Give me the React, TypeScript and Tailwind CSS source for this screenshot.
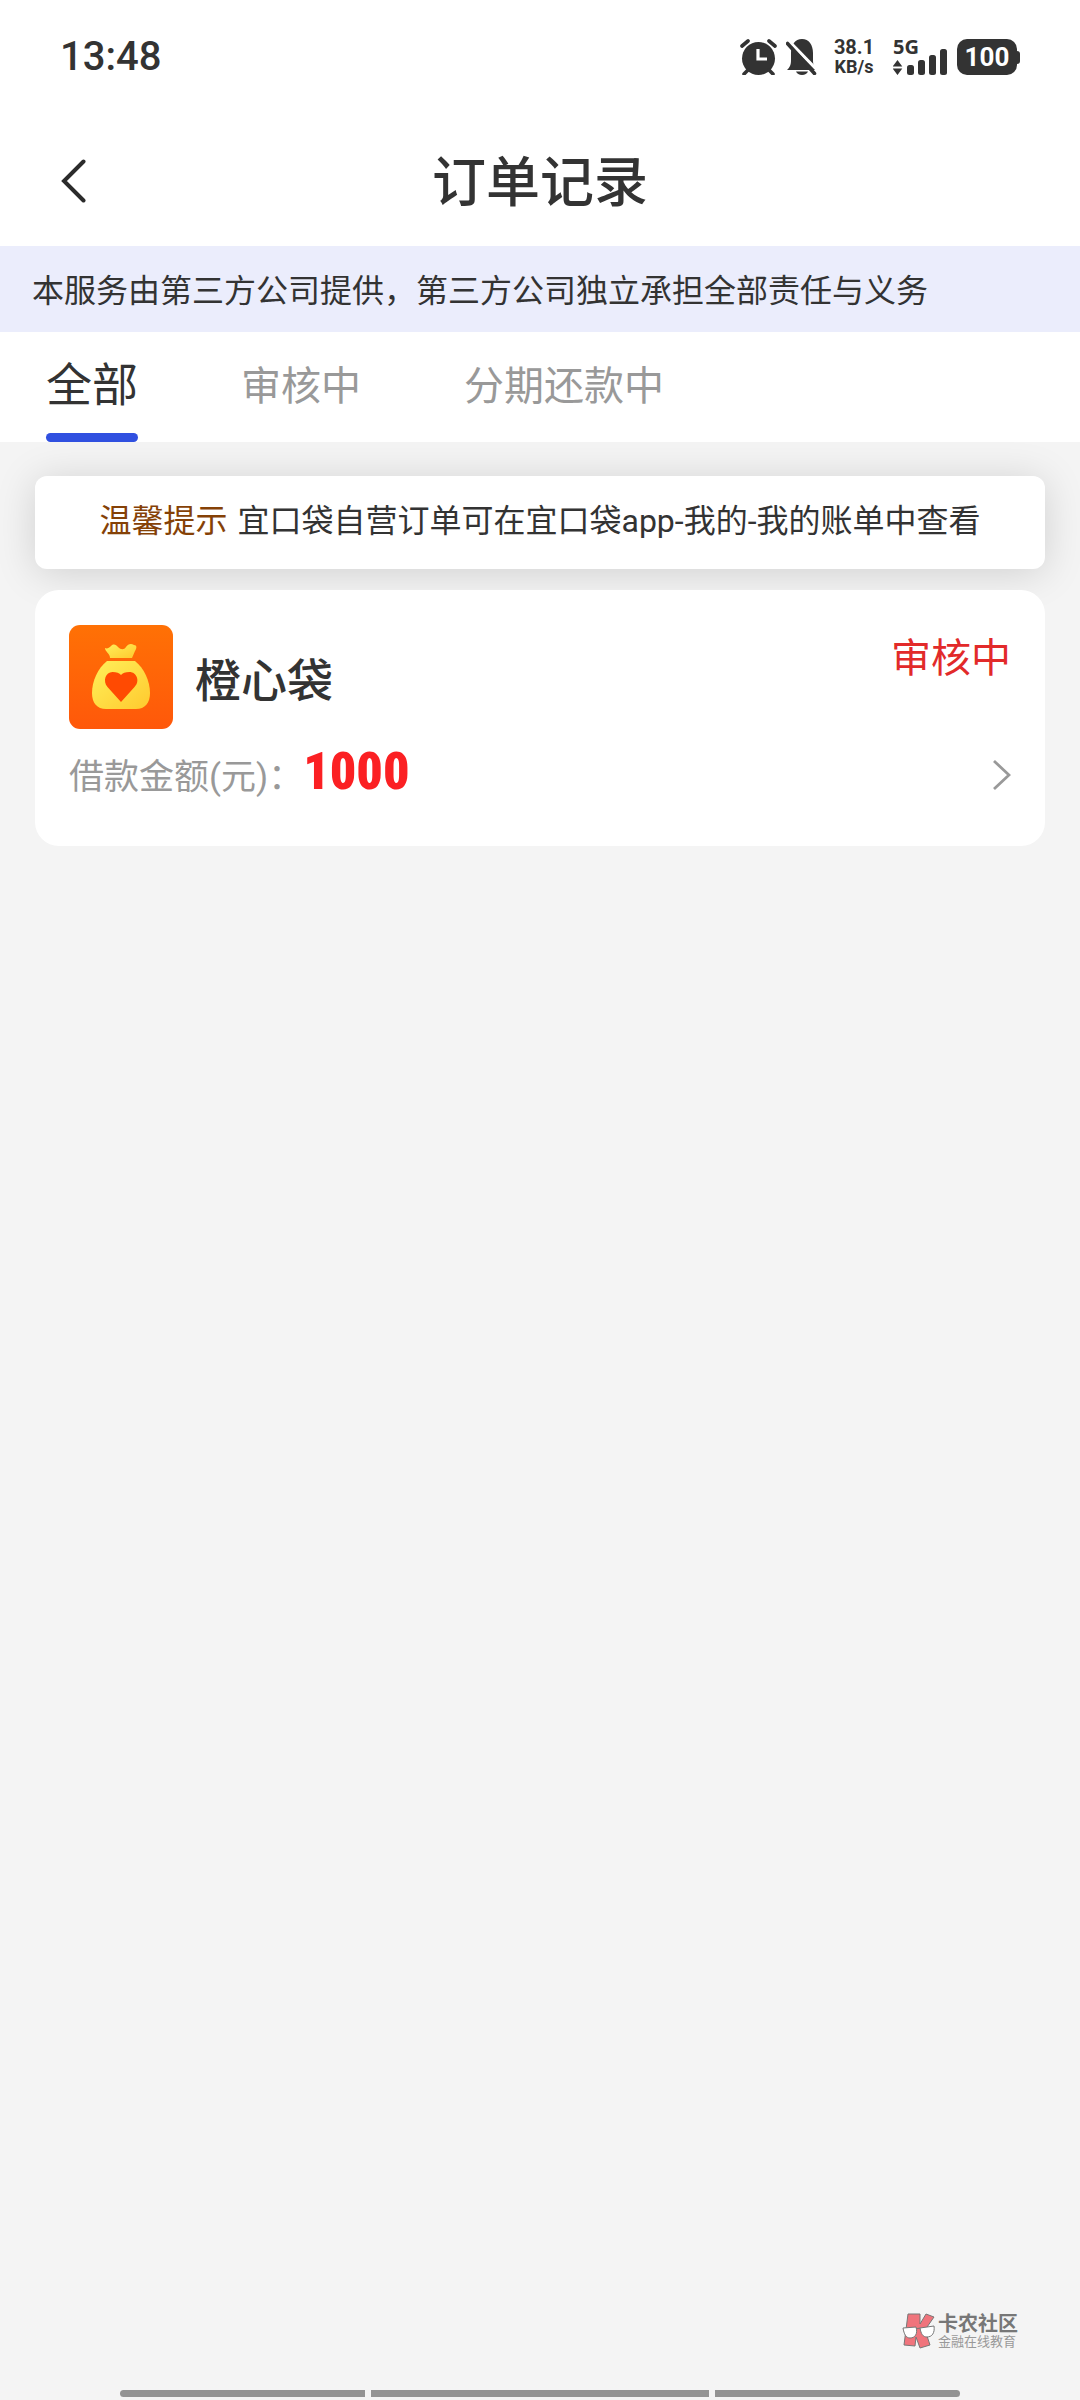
import { useState } from "react";

const TABS = ["全部", "审核中", "分期还款中"] as const;

const ORDERS = [{ id: 1, name: "橙心袋", amount: 1000, status: "审核中" }];

function AlarmIcon() {
  return (
    <svg width="37" height="36" viewBox="0 0 37 36" fill="none" aria-hidden="true">
      <circle cx="18.5" cy="19.5" r="16.5" fill="#333" />
      <path d="M2 7l6-5M35 7l-6-5M4 35l4-4M33 35l-4-4" stroke="#333" strokeWidth="3.6" strokeLinecap="round" />
      <path d="M18 10v10h9" stroke="#fff" strokeWidth="3.2" />
    </svg>
  );
}

function BellOffIcon() {
  return (
    <svg width="32" height="36" viewBox="0 0 32 36" fill="none" aria-hidden="true">
      <path d="M1 31c3-3 4-5 4-10v-7C5 6 9 0 16 0s11 6 11 14v7c0 5 1 7 4 10z" fill="#333" />
      <path d="M10 32.500h12c-1 2-3 3.500-6 3.500s-5-1.500-6-3.500z" fill="#333" />
      <path d="M3 2l30 31" stroke="#fff" strokeWidth="3" />
      <path d="M1.500 4.500l27 30" stroke="#333" strokeWidth="3.600" strokeLinecap="round" />
    </svg>
  );
}

function SignalIcon() {
  return (
    <svg width="54" height="26" viewBox="0 0 54 26" fill="#333" aria-hidden="true">
      <path d="M4.500 11l4.800 6.500H-.3zM4.500 26l-4.800-6.500h9.600z" />
      <rect x="14" y="16" width="7" height="10" rx="2.500" />
      <rect x="25" y="11" width="7" height="15" rx="2.500" />
      <rect x="36" y="6" width="7" height="20" rx="2.500" />
      <rect x="47" y="0" width="7" height="26" rx="2.500" />
    </svg>
  );
}

function StatusBar() {
  return (
    <div className="flex h-[114px] items-center justify-between px-[60px]">
      <time className="text-[40px] leading-[48px] font-medium">13:48</time>
      <div className="flex items-center">
        <AlarmIcon />
        <div className="ml-[9px]">
          <BellOffIcon />
        </div>
        <div className="ml-4 flex w-10 flex-col items-center font-bold">
          <span className="text-[20px] leading-5">38.1</span>
          <span className="text-[18px] leading-5">KB/s</span>
        </div>
        <div className="ml-[19px] flex h-[36px] w-[54px] flex-col justify-between">
          <span className="h-2.5 font-['Noto_Sans'] text-[20px] leading-4 font-bold">5G</span>
          <SignalIcon />
        </div>
        <div className="ml-2.5 flex items-center">
          <span className="flex h-[36px] w-[60px] items-center justify-center rounded-[10px] bg-[#333] text-[26px] font-bold text-white">
            100
          </span>
          <span className="h-[13px] w-[3px] rounded-r-sm bg-[#333]" />
        </div>
      </div>
    </div>
  );
}

function MoneyBagIcon() {
  return (
    <svg className="h-[104px] w-[104px] rounded-[11px]" viewBox="0 0 104 104" aria-hidden="true">
      <defs>
        <linearGradient id="tile" x1="0" y1="0" x2="0" y2="1">
          <stop offset="0" stopColor="#ff7105" />
          <stop offset="1" stopColor="#ff580a" />
        </linearGradient>
        <linearGradient id="bag" x1="0" y1="0" x2="1" y2="1">
          <stop offset="0" stopColor="#fff05a" />
          <stop offset="1" stopColor="#ffc92e" />
        </linearGradient>
      </defs>
      <rect width="104" height="104" fill="url(#tile)" />
      <path
        d="M36 23c2 1 4 0 6-2 3-3 5-1 7 1 3 3 6 3 8 0s5-4 8-2c3 0 3 3 1 6l-3 7H41c0-5-5-6-5-10z"
        fill="url(#bag)"
      />
      <path d="M38 36h28c9 7 15 20 15 32 0 10-5 16-14 16H37c-9 0-14-6-14-16 0-12 6-25 15-32z" fill="url(#bag)" />
      <path d="M52 77L38.500 62c-5-6-2-15 5-15 4 0 7 1 8.500 3 1.500-2 4.500-3 8.500-3 7 0 11 9 5 15z" fill="#ff4a02" />
    </svg>
  );
}

function CommunityLogo() {
  return (
    <svg width="34" height="36" viewBox="0 0 34 36" stroke="#777" strokeLinejoin="round" aria-hidden="true">
      <path d="M6 1h12v10L24 1l8 3-9 13 5 15-10 3-4-11-1 9-11-1z" fill="#f0747c" />
      <path d="M1 15l13-1c2 7-1 11-6 11-4 0-6-4-7-10zM18 15l14-2c1 7-2 11-7 11-4 0-6-3-7-9zM14 16l4-1" fill="#fff" />
    </svg>
  );
}

function OrderCard({ order }: { order: (typeof ORDERS)[number] }) {
  return (
    <a href={`#order-${order.id}`} className="relative mt-[21px] block rounded-[24px] bg-white px-[34px] pt-[35px] pb-9">
      <div className="flex items-start">
        <MoneyBagIcon />
        <h2 className="ml-[22px] flex-1 self-center pt-2 text-[46px] leading-[52px] font-medium">{order.name}</h2>
        <span className="mt-1.5 text-[40px] leading-[56px] text-[#e22a2a]">{order.status}</span>
      </div>
      <div className="mt-2.5 flex h-[71px] items-center justify-between">
        <p className="flex items-baseline">
          <span className="text-[35px] leading-[52px] text-[#999]">借款金额(元)：</span>
          <strong className="font-['Roboto_Condensed',Roboto,sans-serif] text-[52px] leading-[52px] font-black text-[#fb2023]">
            {order.amount}
          </strong>
        </p>
        <svg width="20" height="32" viewBox="0 0 20 32" fill="none" aria-hidden="true">
          <path d="M3 2l15 14L3 30" stroke="#999" strokeWidth="2.800" />
        </svg>
      </div>
    </a>
  );
}

export default function App() {
  const [active, setActive] = useState<(typeof TABS)[number]>("全部");

  return (
    <div className="flex min-h-screen flex-col bg-[#f4f4f4] font-[Roboto,'Noto_Sans_CJK_SC',sans-serif] text-[#333]">
      <div className="relative z-10 bg-white">
        <StatusBar />
        <header className="grid h-[132px] grid-cols-[1fr_auto_1fr] items-center px-[60px] pt-0.5">
          <button type="button" aria-label="返回" className="w-7">
            <svg width="28" height="44" viewBox="0 0 28 44" fill="none" aria-hidden="true">
              <path d="M23.500 2.500L4 22l19.500 19.500" stroke="#2b2b2b" strokeWidth="4" strokeLinecap="round" />
            </svg>
          </button>
          <h1 className="pt-1.5 text-[54px] leading-[64px] font-medium">订单记录</h1>
        </header>
        <p className="bg-[#ebedfc] px-8 pt-[21px] pb-[17px] text-[32px] leading-[48px]">
          本服务由第三方公司提供，第三方公司独立承担全部责任与义务
        </p>
        <nav className="flex h-[110px] gap-[103px] px-[46px]">
          {TABS.map((tab) => (
            <button key={tab} type="button" onClick={() => setActive(tab)} className="flex flex-col">
              <span
                className={
                  tab === active
                    ? "flex flex-1 items-center pt-1.5 text-[46px]"
                    : "flex flex-1 items-center pt-2 text-[40px] text-[#999]"
                }
              >
                {tab}
              </span>
              <span className={tab === active ? "h-[9px] w-full rounded-full bg-[#3050e0]" : "h-[9px] w-full"} />
            </button>
          ))}
        </nav>
      </div>

      <main className="px-[35px] pt-[34px]">
        <p className="flex justify-center gap-2.5 rounded-[12px] bg-white px-6 pt-[21px] pb-[23px] text-[32px] leading-[49px] shadow-[0_4px_40px_rgba(0,0,0,0.15)]">
          <span className="text-[#854106]">温馨提示</span>
          <span>宜口袋自营订单可在宜口袋app-我的-我的账单中查看</span>
        </p>
        {ORDERS.map((order) => (
          <OrderCard key={order.id} order={order} />
        ))}
      </main>

      <footer className="mt-auto pb-[3px]">
        <div className="flex items-center justify-end gap-0.5 pr-[62px] text-[#777]">
          <CommunityLogo />
          <div className="flex flex-col">
            <span className="text-[20px] leading-[22px] font-bold">卡农社区</span>
            <span className="text-[13px] leading-[14px] text-[#999]">金融在线教育</span>
          </div>
        </div>
        <div className="mt-[41px] flex gap-1.5 px-[120px]">
          <span className="h-[7px] flex-[245] rounded-l-full bg-[#939393]" />
          <span className="h-[7px] flex-[338] bg-[#939393]" />
          <span className="h-[7px] flex-[245] rounded-r-full bg-[#939393]" />
        </div>
      </footer>
    </div>
  );
}
